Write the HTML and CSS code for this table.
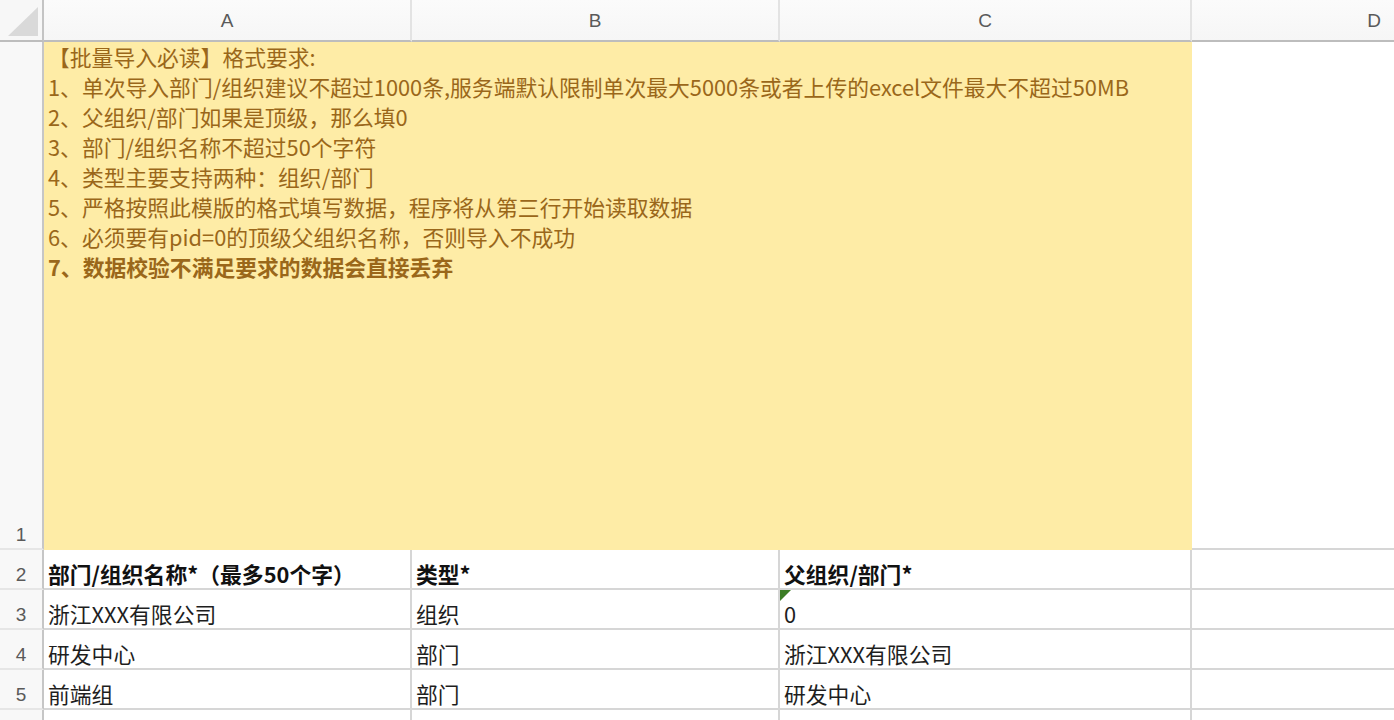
FILE: index.html
```html
<!DOCTYPE html>
<html lang="zh-CN">
<head>
<meta charset="utf-8">
<title>批量导入模板</title>
<link rel="stylesheet" href="styles.css">
</head>
<body>
<div class="sheet">
  <div class="corner"><span class="corner-tri"></span></div>
  <div class="colhdr">A</div>
  <div class="colhdr">B</div>
  <div class="colhdr">C</div>
  <div class="colhdr last">D</div>

  <div class="rowhdr">1</div>
  <div class="note">
    <div>【批量导入必读】格式要求:</div>
    <div>1、单次导入部门/组织建议不超过1000条,服务端默认限制单次最大5000条或者上传的excel文件最大不超过50MB</div>
    <div>2、父组织/部门如果是顶级，那么填0</div>
    <div>3、部门/组织名称不超过50个字符</div>
    <div>4、类型主要支持两种：组织/部门</div>
    <div>5、严格按照此模版的格式填写数据，程序将从第三行开始读取数据</div>
    <div>6、必须要有pid=0的顶级父组织名称，否则导入不成功</div>
    <div class="strong">7、数据校验不满足要求的数据会直接丢弃</div>
  </div>
  <div class="cell last"></div>

  <div class="rowhdr">2</div>
  <div class="cell bold">部门/组织名称*（最多50个字）</div>
  <div class="cell bold">类型*</div>
  <div class="cell bold">父组织/部门*</div>
  <div class="cell last"></div>

  <div class="rowhdr">3</div>
  <div class="cell">浙江XXX有限公司</div>
  <div class="cell">组织</div>
  <div class="cell"><span class="flag"></span>0</div>
  <div class="cell last"></div>

  <div class="rowhdr">4</div>
  <div class="cell">研发中心</div>
  <div class="cell">部门</div>
  <div class="cell">浙江XXX有限公司</div>
  <div class="cell last"></div>

  <div class="rowhdr">5</div>
  <div class="cell">前端组</div>
  <div class="cell">部门</div>
  <div class="cell">研发中心</div>
  <div class="cell last"></div>

  <div class="rowhdr"></div>
  <div class="cell"></div>
  <div class="cell"></div>
  <div class="cell"></div>
  <div class="cell last"></div>
</div>
</body>
</html>
```

FILE: styles.css
```css
* { box-sizing: border-box; }
html, body {
  margin: 0;
  padding: 0;
  background: #ffffff;
  overflow: hidden;
}
body {
  font-family: "Noto Sans CJK SC", "Noto Sans", sans-serif;
  color: #1a1a1a;
}
.sheet {
  display: grid;
  grid-template-columns: 44px 368px 368px 412px 364px;
  grid-template-rows: 42px 508px 40px 40px 40px 40px 40px;
  width: 1394px;
  height: 720px;
  overflow: hidden;
}
.corner {
  position: relative;
  background: #f7f7f7;
  border-right: 2px solid #c4c4c4;
  border-bottom: 2px solid #bdbdbd;
}
.corner-tri {
  position: absolute;
  left: 8px;
  top: 7px;
  width: 0;
  height: 0;
  border-style: solid;
  border-width: 0 0 29px 30px;
  border-color: transparent transparent #d9d9d9 transparent;
}
.colhdr {
  display: flex;
  align-items: center;
  justify-content: center;
  background: linear-gradient(#fbfbfb, #f6f6f6);
  border-right: 2px solid #e3e3e3;
  border-bottom: 2px solid #bdbdbd;
  font-family: "Liberation Sans", "Noto Sans", sans-serif;
  font-size: 19px;
  color: #5a5a5a;
  padding-top: 2px;
}
.colhdr.last { border-right: none; }
.rowhdr {
  display: flex;
  align-items: flex-end;
  justify-content: center;
  background: #f8f8f8;
  border-right: 2px solid #c6c6c6;
  border-bottom: 2px solid #e6e6e6;
  font-family: "Liberation Sans", "Noto Sans", sans-serif;
  font-size: 19px;
  line-height: 24px;
  color: #5a5a5a;
  padding-bottom: 1px;
}
.note {
  grid-column: span 3;
  background: #feeca6;
  color: #9a671a;
  font-size: 21.8px;
  line-height: 30px;
  padding-left: 4px;
  white-space: nowrap;
}
.note .strong { font-weight: 700; }
.cell {
  position: relative;
  display: flex;
  align-items: flex-end;
  border-right: 2px solid #d6d6d6;
  border-bottom: 2px solid #d6d6d6;
  padding-left: 4px;
  padding-bottom: 1px;
  font-size: 21.8px;
  line-height: 26px;
  white-space: nowrap;
  color: #1e1e1e;
}
.cell.last { border-right: none; }
.bold { font-weight: 700; color: #111; }
.flag {
  position: absolute;
  left: 0;
  top: 0;
  width: 0;
  height: 0;
  border-style: solid;
  border-width: 11px 11px 0 0;
  border-color: #3c7d25 transparent transparent transparent;
}
```
